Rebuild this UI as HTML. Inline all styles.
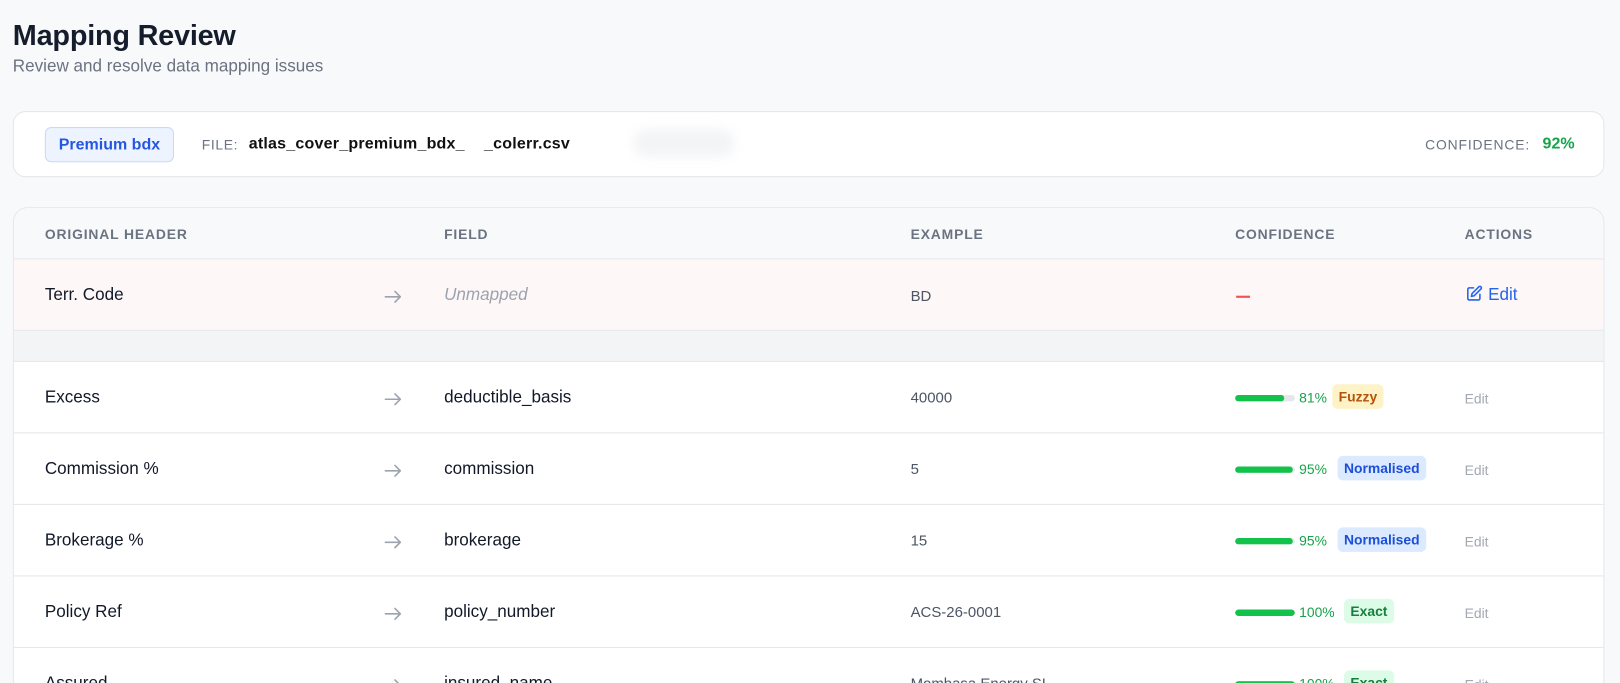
<!DOCTYPE html>
<html style="overflow:hidden"><head><meta charset="utf-8"><style>
*{box-sizing:border-box;margin:0;padding:0}
html,body{width:1620px;height:683px;overflow:hidden}
body{background:#f8f9fb;font-family:"Liberation Sans",sans-serif;color:#111827;position:relative}
#w{position:absolute;left:0;top:0;width:1517px;height:640px;transform:scale(1.0675);transform-origin:0 0;overflow:hidden}
.a{position:absolute;white-space:nowrap}
h1{position:absolute;left:12px;top:18px;font-size:27px;font-weight:700;color:#151c2c;letter-spacing:-0.2px}
.sub{left:12px;top:54px;font-size:16px;color:#6b7280}
.top{position:absolute;left:12px;top:104px;width:1491px;height:62px;background:#fff;border:1px solid #e5e7eb;border-radius:12px}
.pill{position:absolute;left:29px;top:14px;width:121px;height:33px;background:#eef4ff;border:1px solid #c7dafc;border-radius:6px;color:#2556e0;font-size:15px;font-weight:600;text-align:center;line-height:31px}
.card{position:absolute;left:12px;top:194px;width:1491px;height:520px;background:#fff;border:1px solid #e5e7eb;border-radius:14px;overflow:hidden}
.row{position:absolute;left:0;width:1491px;border-bottom:1px solid #e5e7eb}
.th{font-size:13px;color:#6b7280;letter-spacing:0.8px;font-weight:600}
.c1{font-size:16px;color:#111827}
.ex{font-size:14px;color:#4b5563}
.bar{position:absolute;width:56px;height:6px;border-radius:3px;background:#e5e7eb;overflow:hidden}
.bar i{display:block;height:6px;background:#12c24a;border-radius:3px}
.pct{font-size:13px;color:#16a34a}
.tag{font-size:13px;font-weight:600;border-radius:5px;padding:4px 6px}
.ed{font-size:13px;color:#a3a8b1}
.ar{position:absolute;left:347px;top:29px}
</style></head><body><div id="w">
<h1>Mapping Review</h1>
<div class="a sub">Review and resolve data mapping issues</div>
<div class="top">
<div class="pill">Premium bdx</div>
<div class="a" style="left:176px;top:23px;font-size:13px;color:#6b7280;letter-spacing:0.6px">FILE:</div>
<div class="a" style="left:220px;top:21px;font-size:15px;font-weight:700;color:#111;letter-spacing:0.2px">atlas_cover_premium_bdx_<span style="display:inline-block;width:18px"></span>_colerr.csv</div>
<div class="a" style="left:580px;top:16px;width:95px;height:26px;border-radius:13px;background:#f3f4f6;filter:blur(5px)"></div>
<div class="a" style="left:1322px;top:23px;font-size:13px;color:#6b7280;letter-spacing:0.8px">CONFIDENCE:</div>
<div class="a" style="left:1432px;top:21px;font-size:15px;font-weight:700;color:#16a34a">92%</div>
</div>
<div class="card">
<div class="row" style="top:0;height:48px;background:#f8f9fb">
<div class="a th" style="left:29px;top:17px">ORIGINAL HEADER</div>
<div class="a th" style="left:403px;top:17px">FIELD</div>
<div class="a th" style="left:840px;top:17px">EXAMPLE</div>
<div class="a th" style="left:1144px;top:17px">CONFIDENCE</div>
<div class="a th" style="left:1359px;top:17px">ACTIONS</div>
</div>
<div class="row" style="top:48px;height:67px;background:#fef7f7">
<div class="a c1" style="left:29px;top:25px">Terr. Code</div>
<svg class="ar" width="16" height="12" viewBox="0 0 16 12" fill="none" stroke="#9ca3af" stroke-width="1.5" stroke-linecap="round" stroke-linejoin="round"><path d="M1 6h14M10 1l5 5-5 5"/></svg>
<div class="a" style="left:403px;top:25px;font-size:16px;font-style:italic;color:#9ca3af">Unmapped</div>
<div class="a ex" style="left:840px;top:26px">BD</div>
<div class="a" style="left:1145px;top:34px;width:13px;height:2px;background:#f05252"></div>
<div class="a" style="left:1360px;top:24px;font-size:16px;color:#2563eb"><svg width="16" height="16" viewBox="0 0 24 24" fill="none" stroke="#2563eb" stroke-width="2.2" stroke-linecap="round" stroke-linejoin="round" style="vertical-align:-2px;margin-right:5px"><path d="M11 4H5a2 2 0 0 0-2 2v13a2 2 0 0 0 2 2h13a2 2 0 0 0 2-2v-6"/><path d="M18.5 2.5a2.1 2.1 0 0 1 3 3L12 15l-4 1 1-4z"/></svg>Edit</div>
</div>
<div class="row" style="top:115px;height:29px;background:#f3f4f6"></div>
<div class="row" style="top:144px;height:67px">
<div class="a c1" style="left:29px;top:25px">Excess</div><svg class="ar" width="16" height="12" viewBox="0 0 16 12" fill="none" stroke="#9ca3af" stroke-width="1.5" stroke-linecap="round" stroke-linejoin="round"><path d="M1 6h14M10 1l5 5-5 5"/></svg>
<div class="a c1" style="left:403px;top:25px">deductible_basis</div><div class="a ex" style="left:840px;top:25px">40000</div>
<div class="bar" style="left:1144px;top:31px"><i style="width:46px"></i></div>
<div class="a pct" style="left:1204px;top:26px">81%</div>
<div class="a tag" style="left:1235px;top:21px;background:#fef3c7;color:#b45309">Fuzzy</div>
<div class="a ed" style="left:1359px;top:27px">Edit</div></div>
<div class="row" style="top:211px;height:67px">
<div class="a c1" style="left:29px;top:25px">Commission %</div><svg class="ar" width="16" height="12" viewBox="0 0 16 12" fill="none" stroke="#9ca3af" stroke-width="1.5" stroke-linecap="round" stroke-linejoin="round"><path d="M1 6h14M10 1l5 5-5 5"/></svg>
<div class="a c1" style="left:403px;top:25px">commission</div><div class="a ex" style="left:840px;top:25px">5</div>
<div class="bar" style="left:1144px;top:31px"><i style="width:54px"></i></div>
<div class="a pct" style="left:1204px;top:26px">95%</div>
<div class="a tag" style="left:1240px;top:21px;background:#dbeafe;color:#1d4ed8">Normalised</div>
<div class="a ed" style="left:1359px;top:27px">Edit</div></div>
<div class="row" style="top:278px;height:67px">
<div class="a c1" style="left:29px;top:25px">Brokerage %</div><svg class="ar" width="16" height="12" viewBox="0 0 16 12" fill="none" stroke="#9ca3af" stroke-width="1.5" stroke-linecap="round" stroke-linejoin="round"><path d="M1 6h14M10 1l5 5-5 5"/></svg>
<div class="a c1" style="left:403px;top:25px">brokerage</div><div class="a ex" style="left:840px;top:25px">15</div>
<div class="bar" style="left:1144px;top:31px"><i style="width:54px"></i></div>
<div class="a pct" style="left:1204px;top:26px">95%</div>
<div class="a tag" style="left:1240px;top:21px;background:#dbeafe;color:#1d4ed8">Normalised</div>
<div class="a ed" style="left:1359px;top:27px">Edit</div></div>
<div class="row" style="top:345px;height:67px">
<div class="a c1" style="left:29px;top:25px">Policy Ref</div><svg class="ar" width="16" height="12" viewBox="0 0 16 12" fill="none" stroke="#9ca3af" stroke-width="1.5" stroke-linecap="round" stroke-linejoin="round"><path d="M1 6h14M10 1l5 5-5 5"/></svg>
<div class="a c1" style="left:403px;top:25px">policy_number</div><div class="a ex" style="left:840px;top:25px">ACS-26-0001</div>
<div class="bar" style="left:1144px;top:31px"><i style="width:56px"></i></div>
<div class="a pct" style="left:1204px;top:26px">100%</div>
<div class="a tag" style="left:1246px;top:21px;background:#dcfce7;color:#15803d">Exact</div>
<div class="a ed" style="left:1359px;top:27px">Edit</div></div>
<div class="row" style="top:412px;height:67px">
<div class="a c1" style="left:29px;top:25px">Assured</div><svg class="ar" width="16" height="12" viewBox="0 0 16 12" fill="none" stroke="#9ca3af" stroke-width="1.5" stroke-linecap="round" stroke-linejoin="round"><path d="M1 6h14M10 1l5 5-5 5"/></svg>
<div class="a c1" style="left:403px;top:25px">insured_name</div><div class="a ex" style="left:840px;top:25px">Mombasa Energy SL</div>
<div class="bar" style="left:1144px;top:31px"><i style="width:56px"></i></div>
<div class="a pct" style="left:1204px;top:26px">100%</div>
<div class="a tag" style="left:1246px;top:21px;background:#dcfce7;color:#15803d">Exact</div>
<div class="a ed" style="left:1359px;top:27px">Edit</div></div>
</div>
</div></body></html>
